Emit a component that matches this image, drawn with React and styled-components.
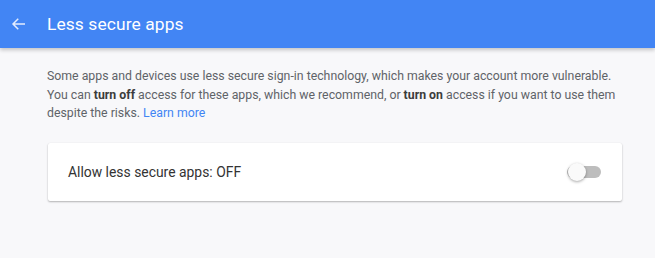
import React from 'react';
import styled, { createGlobalStyle } from 'styled-components';

const GlobalStyle = createGlobalStyle`
    html, body {
        margin: 0;
        padding: 0;
        background-color: #f8f8fa;
        font-family: Roboto, "Liberation Sans", Arial, sans-serif;
    }
`;

/**
 * Header
 */

const Header = styled.header`
    display: flex;
    align-items: center;
    height: 48px;
    background-color: #4285f4;
    color: #fff;
    box-shadow: 0 2px 4px rgba(0, 0, 0, 0.22);
    position: relative;
    z-index: 1;
`;

const BackButton = styled.span`
    display: flex;
    align-items: center;
    justify-content: center;
    width: 37px;
    height: 48px;
    margin-right: 10px;
`;

const Title = styled.h1`
    margin: 0;
    font-size: 17.4px;
    font-weight: 400;
    letter-spacing: 0.1px;
`;

const BackArrow = () => (
    <svg width="18" height="18" viewBox="0 0 24 24" fill="none">
        <path d="M20 12H4.5M11 5l-7 7 7 7" stroke="#e3ecfd" strokeWidth="2" />
    </svg>
);

/**
 * Content
 */

const Main = styled.main`
    padding: 19px 20px 56px 47px;
`;

const Intro = styled.p`
    margin: 0 0 20px;
    font-size: 12.3px;
    line-height: 18.5px;
    color: #5f6368;
    white-space: nowrap;

    b {
        font-weight: 700;
        color: #3c3c3c;
    }

    a {
        color: #4285f4;
        text-decoration: none;
    }
`;

const Card = styled.section`
    display: flex;
    align-items: center;
    justify-content: space-between;
    height: 58px;
    margin-left: 1px;
    margin-right: 13px;
    padding: 0 21px 0 20px;
    background-color: #fff;
    border-radius: 2px;
    box-shadow: 0 1px 2px rgba(0, 0, 0, 0.28), 0 0 1px rgba(0, 0, 0, 0.08);
`;

const Label = styled.span`
    font-size: 13.9px;
    color: #333;
`;

/**
 * Switch
 */

const Switch = styled.span`
    position: relative;
    display: inline-block;
    width: 34px;
    height: 12px;
    border-radius: 6px;
    background-color: ${p => (p.on ? '#a1c2fa' : '#bdbdbd')};
`;

const Thumb = styled.span`
    position: absolute;
    top: -3px;
    left: ${p => (p.on ? '16px' : '1px')};
    width: 18px;
    height: 18px;
    border-radius: 50%;
    background-color: ${p => (p.on ? '#4285f4' : '#fafafa')};
    box-shadow: 0 1px 3px rgba(0, 0, 0, 0.35);
`;

const App = () => {
    const allowed = false;

    return (
        <React.Fragment>
            <GlobalStyle />
            <Header>
                <BackButton>
                    <BackArrow />
                </BackButton>
                <Title>Less secure apps</Title>
            </Header>
            <Main>
                <Intro>
                    Some apps and devices use less secure sign-in technology, which makes your account more vulnerable.
                    <br />
                    You can <b>turn off</b> access for these apps, which we recommend, or <b>turn on</b> access if you want to use them
                    <br />
                    despite the risks. <a href="#">Learn more</a>
                </Intro>
                <Card>
                    <Label>Allow less secure apps: {allowed ? 'ON' : 'OFF'}</Label>
                    <Switch on={allowed}>
                        <Thumb on={allowed} />
                    </Switch>
                </Card>
            </Main>
        </React.Fragment>
    );
};

export default App;
